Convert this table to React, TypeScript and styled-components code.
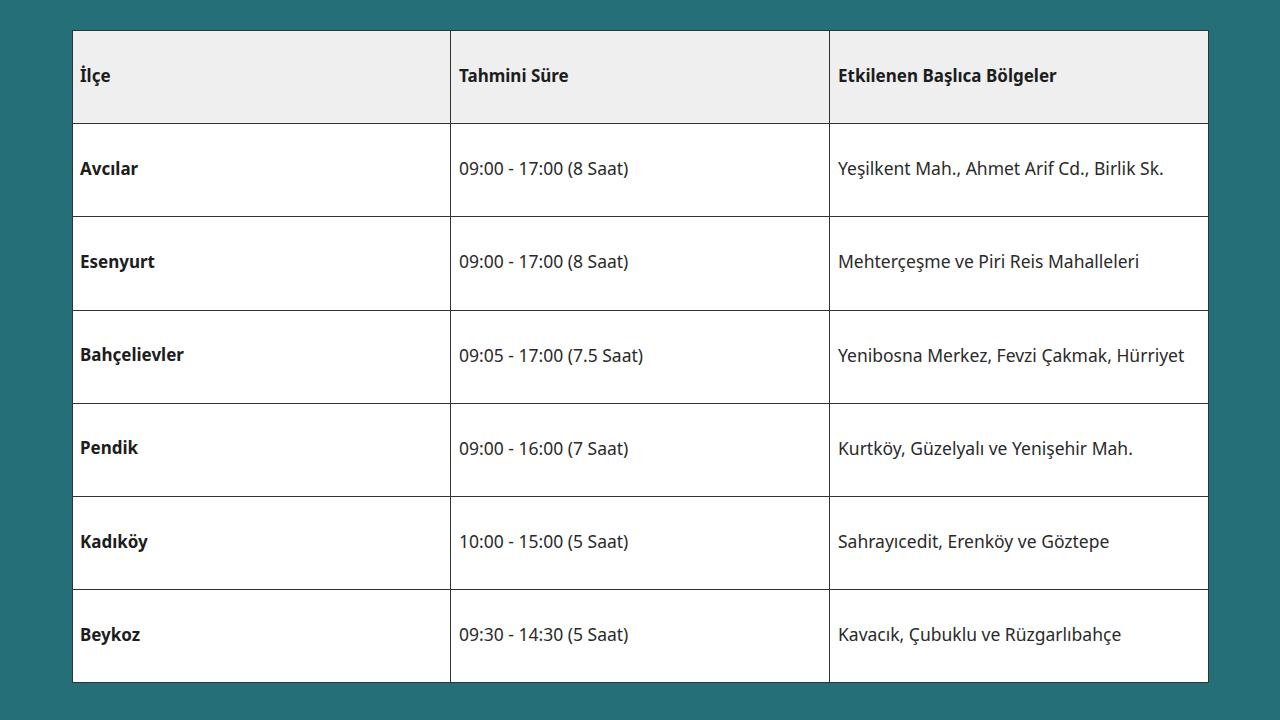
import React from "react";
import styled, { createGlobalStyle } from "styled-components";

const Global = createGlobalStyle`
  html, body { margin: 0; padding: 0; background: #256f78; }
  body { font-family: "Noto Sans", "Open Sans", sans-serif; }
`;

const Page = styled.div`
  width: 1280px;
  height: 720px;
  box-sizing: border-box;
  padding: 30px 72px 0 72px;
  background: #256f78;
`;

const Table = styled.table`
  width: 1136px;
  border-collapse: collapse;
  table-layout: fixed;
  background: #ffffff;
  color: #222;
`;

const Col = styled.col<{ $w: number }>`
  width: ${(p) => p.$w}px;
`;

const HeadCell = styled.th<{ $first?: boolean }>`
  height: 93.2px;
  box-sizing: border-box;
  padding: 0 7px 4px ${(p) => (p.$first ? 7 : 8)}px;
  background: #efefef;
  border: 1px solid #333;
  text-align: left;
  font-weight: 700;
  font-size: 17px;
  color: #1d1d1d;
`;

const Cell = styled.td<{ $bold?: boolean }>`
  height: 93.2px;
  box-sizing: border-box;
  padding: 0 7px 4px ${(p) => (p.$bold ? 7 : 8)}px;
  border: 1px solid #333;
  font-weight: ${(p) => (p.$bold ? 700 : 400)};
  font-size: ${(p) => (p.$bold ? "17px" : "17.5px")};
  color: ${(p) => (p.$bold ? "#1d1d1d" : "#2a2a2a")};
  white-space: nowrap;
`;

const rows = [
  ["Avcılar", "09:00 - 17:00 (8 Saat)", "Yeşilkent Mah., Ahmet Arif Cd., Birlik Sk."],
  ["Esenyurt", "09:00 - 17:00 (8 Saat)", "Mehterçeşme ve Piri Reis Mahalleleri"],
  ["Bahçelievler", "09:05 - 17:00 (7.5 Saat)", "Yenibosna Merkez, Fevzi Çakmak, Hürriyet"],
  ["Pendik", "09:00 - 16:00 (7 Saat)", "Kurtköy, Güzelyalı ve Yenişehir Mah."],
  ["Kadıköy", "10:00 - 15:00 (5 Saat)", "Sahrayıcedit, Erenköy ve Göztepe"],
  ["Beykoz", "09:30 - 14:30 (5 Saat)", "Kavacık, Çubuklu ve Rüzgarlıbahçe"],
];

export default function App() {
  return (
    <Page>
      <Global />
      <Table>
        <colgroup>
          <Col $w={378} />
          <Col $w={379} />
          <Col $w={379} />
        </colgroup>
        <thead>
          <tr>
            <HeadCell $first>İlçe</HeadCell>
            <HeadCell>Tahmini Süre</HeadCell>
            <HeadCell>Etkilenen Başlıca Bölgeler</HeadCell>
          </tr>
        </thead>
        <tbody>
          {rows.map((r) => (
            <tr key={r[0]}>
              <Cell $bold>{r[0]}</Cell>
              <Cell>{r[1]}</Cell>
              <Cell>{r[2]}</Cell>
            </tr>
          ))}
        </tbody>
      </Table>
    </Page>
  );
}
